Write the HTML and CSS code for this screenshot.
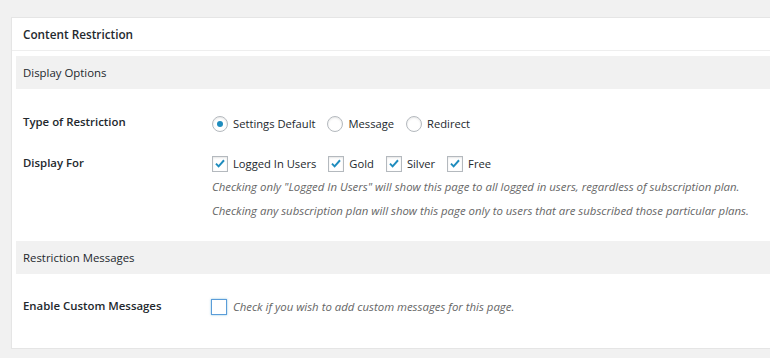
FILE: index.html
```html
<!DOCTYPE html>
<html>
<head>
<meta charset="utf-8">
<link rel="stylesheet" href="styles.css">
</head>
<body>
<div class="postbox">
  <h2 class="hndle">Content Restriction</h2>
  <div class="inside">
    <div class="section-title">Display Options</div>

    <div class="row row-type">
      <div class="label">Type of Restriction</div>
      <div class="field">
        <div class="options">
          <label class="opt"><span class="radio checked"></span><span class="txt">Settings Default</span></label>
          <label class="opt"><span class="radio"></span><span class="txt">Message</span></label>
          <label class="opt"><span class="radio"></span><span class="txt">Redirect</span></label>
        </div>
      </div>
    </div>

    <div class="row row-display">
      <div class="label">Display For</div>
      <div class="field">
        <div class="options">
          <label class="opt"><span class="check checked"><svg viewBox="0 0 16 16"><path d="M3.4 7.6l3 3.1 6.2-7" /></svg></span><span class="txt">Logged In Users</span></label>
          <label class="opt"><span class="check checked"><svg viewBox="0 0 16 16"><path d="M3.4 7.6l3 3.1 6.2-7" /></svg></span><span class="txt">Gold</span></label>
          <label class="opt"><span class="check checked"><svg viewBox="0 0 16 16"><path d="M3.4 7.6l3 3.1 6.2-7" /></svg></span><span class="txt">Silver</span></label>
          <label class="opt"><span class="check checked"><svg viewBox="0 0 16 16"><path d="M3.4 7.6l3 3.1 6.2-7" /></svg></span><span class="txt">Free</span></label>
        </div>
        <p class="desc">Checking only "Logged In Users" will show this page to all logged in users, regardless of subscription plan.</p>
        <p class="desc">Checking any subscription plan will show this page only to users that are subscribed those particular plans.</p>
      </div>
    </div>

    <div class="section-title second">Restriction Messages</div>

    <div class="row row-custom">
      <div class="label">Enable Custom Messages</div>
      <div class="field">
        <label class="opt"><span class="check focus"></span><span class="desc-inline">Check if you wish to add custom messages for this page.</span></label>
      </div>
    </div>
  </div>
</div>
</body>
</html>
```
FILE: styles.css
```css
html, body {
  overflow: hidden;
}
body {
  margin: 0;
  padding: 17px 0 0 11px;
  background: #f1f1f1;
  font-family: "Open Sans", "Noto Sans", sans-serif;
  font-size: 11.4px;
  color: #23282d;
}
.postbox {
  background: #fff;
  border: 1px solid #e5e5e5;
  box-shadow: 0 1px 1px rgba(0, 0, 0, 0.04);
  margin-right: -20px;
}
.hndle {
  margin: 0;
  height: 32px;
  line-height: 32px;
  padding-left: 11px;
  font-size: 11.75px;
  font-weight: 600;
  border-bottom: 1px solid #eee;
}
.inside {
  padding: 5px 0 31px 4px;
}
.section-title {
  height: 33px;
  line-height: 33px;
  padding-left: 7px;
  background: #f1f1f1;
}
.section-title.second {
  margin-top: 18px;
}
.row {
  display: flex;
  align-items: flex-start;
}
.label {
  width: 189px;
  padding-left: 7px;
  font-weight: 600;
  line-height: 20px;
  flex: none;
}
.field {
  line-height: 20px;
}
.row-type .label { padding-top: 23px; }
.row-type .field { padding-top: 25px; }
.row-display .label { padding-top: 19px; }
.row-display .field { padding-top: 20px; }
.row-custom .label { padding-top: 22px; }
.row-custom .field { padding-top: 23px; }
.options {
  display: flex;
  gap: 12px;
}
.opt {
  display: flex;
  align-items: center;
  gap: 5px;
}
.txt {
  font-size: 11.2px;
}
.radio, .check {
  width: 14px;
  height: 14px;
  border: 1px solid #b4b9be;
  background: #fff;
  box-shadow: inset 0 1px 2px rgba(0, 0, 0, 0.1);
  flex: none;
  display: flex;
  align-items: center;
  justify-content: center;
}
.radio {
  border-radius: 50%;
}
.radio.checked::before {
  content: "";
  width: 6px;
  height: 6px;
  border-radius: 50%;
  background: #1e8cbe;
}
.check svg {
  width: 14px;
  height: 14px;
  fill: none;
  stroke: #1e8cbe;
  stroke-width: 2.2;
}
.check.focus {
  border-color: #5b9dd9;
  box-shadow: 0 0 2px rgba(30, 140, 190, 0.5);
  margin-left: -1px;
}
.desc {
  margin: 0;
  line-height: 24px;
  font-style: italic;
  color: #666;
}
.row-display .options {
  margin-bottom: 1px;
}
.desc-inline {
  font-style: italic;
  color: #666;
  margin-left: 1px;
}
```
